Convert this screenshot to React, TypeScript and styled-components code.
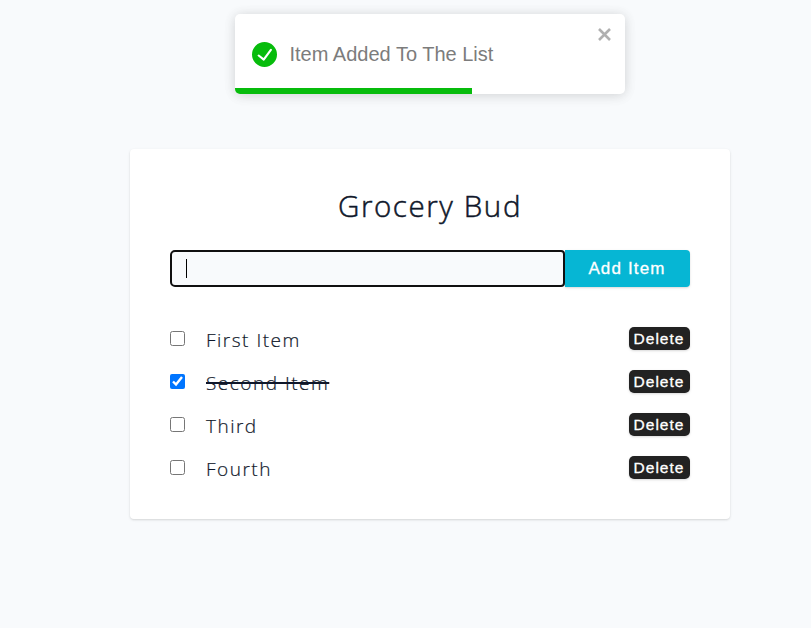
import React, { useState } from "react";
import styled, { createGlobalStyle } from "styled-components";

const GlobalStyle = createGlobalStyle`
  *, *::before, *::after { box-sizing: border-box; }
  body {
    margin: 0;
    min-height: 628px;
    background: #f8fafc;
    color: #0f172a;
    font-family: "Open Sans", "Noto Sans", sans-serif;
    overflow: hidden;
  }
`;

const Page = styled.main`
  display: flex;
  flex-direction: column;
  align-items: center;
  gap: 55px;
  width: 100%;
  padding: 14px 0 0 49px;
`;

const Toast = styled.div`
  position: relative;
  display: flex;
  align-items: center;
  width: 390px;
  height: 80px;
  padding: 0 17px;
  gap: 12.5px;
  overflow: hidden;
  border-radius: 5px;
`;

const ToastShadow = styled.div`
  border-radius: 5px;
  background: #fff;
  box-shadow: 0 1px 12px rgba(0, 0, 0, 0.12), 0 2px 15px rgba(0, 0, 0, 0.05);
`;

const ToastText = styled.span`
  color: #7c7c7c;
  font: 20px/24px "Liberation Sans", Arial, sans-serif;
  white-space: nowrap;
`;

const CloseButton = styled.button`
  position: absolute;
  top: 14px;
  right: 14px;
  display: flex;
  padding: 0;
  border: 0;
  background: none;
`;

const Progress = styled.div`
  position: absolute;
  left: 0;
  bottom: 0;
  width: 236.5px;
  height: 6px;
  background: #07bc0c;
`;

const Card = styled.section`
  width: 600px;
  height: 370px;
  padding: 33px 40px 40px;
  border-radius: 4px;
  background: #fff;
  box-shadow: 0 1px 3px rgba(0, 0, 0, 0.1), 0 1px 2px rgba(0, 0, 0, 0.06);
`;

const Title = styled.h1`
  margin: 0 0 21px;
  text-align: center;
  font-size: 29.5px;
  font-weight: 300;
  line-height: 47px;
  letter-spacing: 1.6px;
  -webkit-text-stroke: 0.5px #0f172a;
`;

const Form = styled.form`
  display: flex;
  height: 37px;
  margin-bottom: 40px;
`;

const Field = styled.div`
  position: relative;
  flex: 1;
  display: flex;
`;

const Input = styled.input`
  width: 100%;
  border: 2px solid #101010;
  border-radius: 5px 4px 4px 5px;
  padding: 6px 14px;
  background: #f8fafc;
  outline: none;
  caret-color: transparent;
`;

const Caret = styled.span`
  position: absolute;
  left: 16px;
  top: 9px;
  width: 1px;
  height: 19px;
  background: #000;
`;

const Button = styled.button`
  border: 0;
  color: #fff;
  font-family: "Liberation Sans", Arial, sans-serif;
  letter-spacing: 1px;
  -webkit-text-stroke: 0.3px #fff;
  box-shadow: 0 1px 3px rgba(0, 0, 0, 0.1), 0 1px 2px rgba(0, 0, 0, 0.06);
`;

const AddButton = styled(Button)`
  width: 125px;
  padding: 1px 1px 0 0;
  border-radius: 0 4px 4px 0;
  background: #06b6d4;
  font-size: 17px;
  letter-spacing: 1.15px;
`;

const DeleteButton = styled(Button)`
  width: 61px;
  height: 23px;
  margin-left: auto;
  padding: 1px 1px 0 0;
  border-radius: 5px;
  background: #222;
  font-size: 15.5px;
`;

const List = styled.div`
  display: flex;
  flex-direction: column;
  gap: 20px;
`;

const Item = styled.div`
  display: flex;
  align-items: center;
  height: 23px;
`;

const Checkbox = styled.input`
  width: 15px;
  height: 15px;
  margin: 0 21px 0 0;
`;

const ItemText = styled.span<{ $done: boolean }>`
  padding-top: 3px;
  color: #0f172a;
  font-size: 19px;
  font-weight: 300;
  line-height: 23px;
  letter-spacing: 1.5px;
  -webkit-text-stroke: 0.2px #0f172a;
  text-decoration: ${(p) => (p.$done ? "line-through #0f172a 2px" : "none")};
`;

const names = ["First Item", "Second Item", "Third", "Fourth"];

export default function App() {
  const [done, setDone] = useState([false, true, false, false]);
  const toggle = (i: number) => setDone(done.map((d, n) => (n === i ? !d : d)));

  return (
    <>
      <GlobalStyle />
      <Page>
        <ToastShadow>
          <Toast role="alert">
            <svg width="25" height="25" viewBox="0 0 24 24" fill="#07bc0c">
              <path d="M12 0a12 12 0 1012 12A12.014 12.014 0 0012 0zm6.927 8.2l-6.845 9.289a1.011 1.011 0 01-1.43.188l-4.888-3.908a1 1 0 111.25-1.562l4.076 3.261 6.227-8.451a1 1 0 111.61 1.183z" />
            </svg>
            <ToastText>Item Added To The List</ToastText>
            <CloseButton aria-label="close">
              <svg width="13" height="13" viewBox="0 0 13 13" stroke="#b0b0b0" strokeWidth="2.6">
                <path d="M1 1 12 12M12 1 1 12" />
              </svg>
            </CloseButton>
            <Progress />
          </Toast>
        </ToastShadow>
        <Card>
          <Title>Grocery Bud</Title>
          <Form onSubmit={(e) => e.preventDefault()}>
            <Field>
              <Input type="text" aria-label="New item" />
              <Caret />
            </Field>
            <AddButton type="submit">Add Item</AddButton>
          </Form>
          <List>
            {names.map((name, i) => (
              <Item key={name}>
                <Checkbox type="checkbox" checked={done[i]} onChange={() => toggle(i)} />
                <ItemText $done={done[i]}>{name}</ItemText>
                <DeleteButton type="button">Delete</DeleteButton>
              </Item>
            ))}
          </List>
        </Card>
      </Page>
    </>
  );
}
